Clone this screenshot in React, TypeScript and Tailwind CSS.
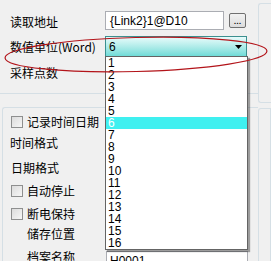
import React from 'react';

const cjk = { fontFamily: '"Noto Sans CJK SC", "Liberation Sans", sans-serif' };
const latin = { fontFamily: '"Liberation Sans", "Noto Sans CJK SC", sans-serif' };

const units = Array.from({ length: 16 }, (_, i) => String(i + 1));

function Checkbox() {
  return (
    <span className="box-border inline-block h-[12px] w-[12px] shrink-0 border border-[#8e8f8f] bg-gradient-to-br from-[#dcdcdc] to-[#f6f6f6]" />
  );
}

function Row({ children, className = '' }: { children: React.ReactNode; className?: string }) {
  return <div className={`flex shrink-0 items-center ${className}`}>{children}</div>;
}

export default function App() {
  return (
    <div
      className="relative flex h-[261px] w-[271px] overflow-hidden bg-[#f0f0f0] text-[12px] leading-none text-black"
      style={cjk}
    >
      <div className="flex w-[258px] shrink-0 flex-col">
        {/* read settings */}
        <div className="flex h-[94px] shrink-0 flex-col border-b border-[#d5dfe5] pl-[10px] pt-[11px]">
          <Row className="h-[19px]">
            <span className="w-[95px] pt-[2px]">读取地址</span>
            <div
              className="flex h-[19px] w-[119px] items-center border border-[#abadb3] bg-white pl-[4px]"
              style={latin}
            >
              {'{Link2}1@D10'}
            </div>
            <div className="ml-[5px] flex h-[15px] w-[17px] items-end justify-center rounded-[2px] border border-[#707070] bg-gradient-to-b from-[#f2f2f2] to-[#dcdcdc] pb-[2px] text-[9px]">
              ...
            </div>
          </Row>
          <Row className="mt-[6px] h-[21px]">
            <span className="w-[95px]">数值单位(Word)</span>
            <div
              className="flex h-[21px] w-[142px] items-center justify-between border border-[#3c8f8f] bg-gradient-to-b from-[#e8fbfb] to-[#6fdcd8] pl-[3px] pr-[4px]"
              style={latin}
            >
              <span>6</span>
              <svg width="7" height="4" viewBox="0 0 7 4">
                <path d="M0 0h7L3.5 4z" fill="#000" />
              </svg>
            </div>
          </Row>
          <Row className="mt-[7px] h-[18px]">
            <span className="w-[95px]">采样点数</span>
          </Row>
        </div>

        {/* record settings */}
        <div className="ml-[2px] mt-[13px] flex min-h-0 flex-1 flex-col rounded-tl-[3px] border-l border-t border-[#d5dfe5] pl-[8px] pt-[8px]">
          <Row className="h-[12px] gap-[4px]">
            <Checkbox />
            <span>记录时间日期</span>
          </Row>
          <Row className="mt-[9px] h-[12px]">
            <span className="-ml-[1px]">时间格式</span>
          </Row>
          <Row className="mt-[13px] h-[12px]">
            <span>日期格式</span>
          </Row>
          <Row className="mt-[11px] h-[12px] gap-[4px]">
            <Checkbox />
            <span>自动停止</span>
          </Row>
          <Row className="mt-[11px] h-[12px] gap-[4px]">
            <Checkbox />
            <span>断电保持</span>
          </Row>
          <Row className="mt-[8px] h-[12px]">
            <span className="pl-[16px]">储存位置</span>
          </Row>
          <div className="mt-[11px] flex h-[20px] shrink-0 items-start">
            <span className="w-[95px] pl-[16px]">档案名称</span>
            <div
              className="flex h-[20px] w-[142px] items-center border border-[#abadb3] bg-white pl-[3px]"
              style={latin}
            >
              H0001
            </div>
          </div>
        </div>
      </div>

      {/* neighbouring panel edge */}
      <div className="flex w-[13px] shrink-0 flex-col">
        <div className="mt-[3px] h-[100px] shrink-0 rounded-l-[3px] border-b border-l border-t border-[#d5dfe5]" />
        <div className="mt-[5px] flex-1 rounded-tl-[3px] border-l border-r border-t border-[#d5dfe5]" />
      </div>

      {/* open dropdown list */}
      <div
        className="absolute left-[105px] top-[56px] w-[143px] border border-[#646464] bg-white shadow-[2px_2px_1px_rgba(0,0,0,0.35)]"
        style={latin}
      >
        {units.map((u) => (
          <div
            key={u}
            className={`flex h-[12px] items-center pl-[2px] leading-[12px] ${u === '6' ? 'bg-[#3ff0f0] text-white' : ''}`}
          >
            {u}
          </div>
        ))}
      </div>

      {/* annotation */}
      <svg className="pointer-events-none absolute left-0 top-0" width="271" height="261">
        <ellipse
          cx="136"
          cy="54.5"
          rx="131"
          ry="17"
          transform="rotate(-1.5 136 54.5)"
          fill="none"
          stroke="#b3141a"
          strokeWidth="1.2"
        />
      </svg>
    </div>
  );
}
